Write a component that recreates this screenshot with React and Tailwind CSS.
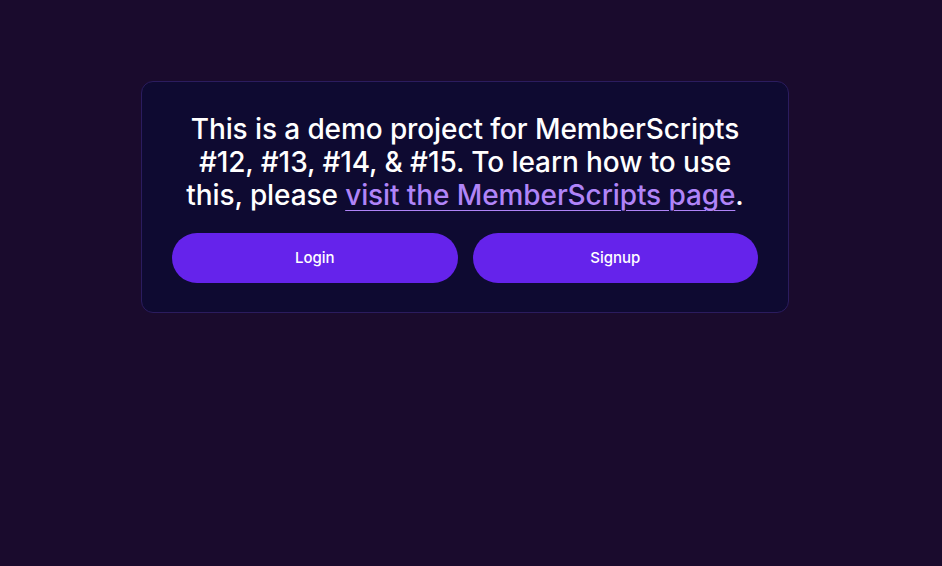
export default function App() {
  return (
    <div className="min-h-screen bg-[#1a0b2d] pt-[81px] pl-[141px]" style={{ fontFamily: 'Inter, "Noto Sans", sans-serif' }}>
      <div className="w-[648px] rounded-xl border border-[#2b1c5e] bg-[#0e0a31] px-[30px] pt-[31px] pb-[29px]">
        <p className="text-center text-[28px] leading-[33px] font-medium tracking-[-0.1px] text-white">
          This is a demo project for MemberScripts #12, #13, #14, &amp; #15. To learn how to use this, please{' '}
          <a href="#" className="text-[#b084f8] underline decoration-1 underline-offset-[5px]">
            visit the MemberScripts page
          </a>
          .
        </p>
        <div className="mt-[21px] grid grid-cols-2 gap-[15px]">
          <button className="h-[50px] rounded-full bg-[#6523eb] text-[15px] font-medium text-white">Login</button>
          <button className="h-[50px] rounded-full bg-[#6523eb] text-[15px] font-medium text-white">Signup</button>
        </div>
      </div>
    </div>
  );
}
